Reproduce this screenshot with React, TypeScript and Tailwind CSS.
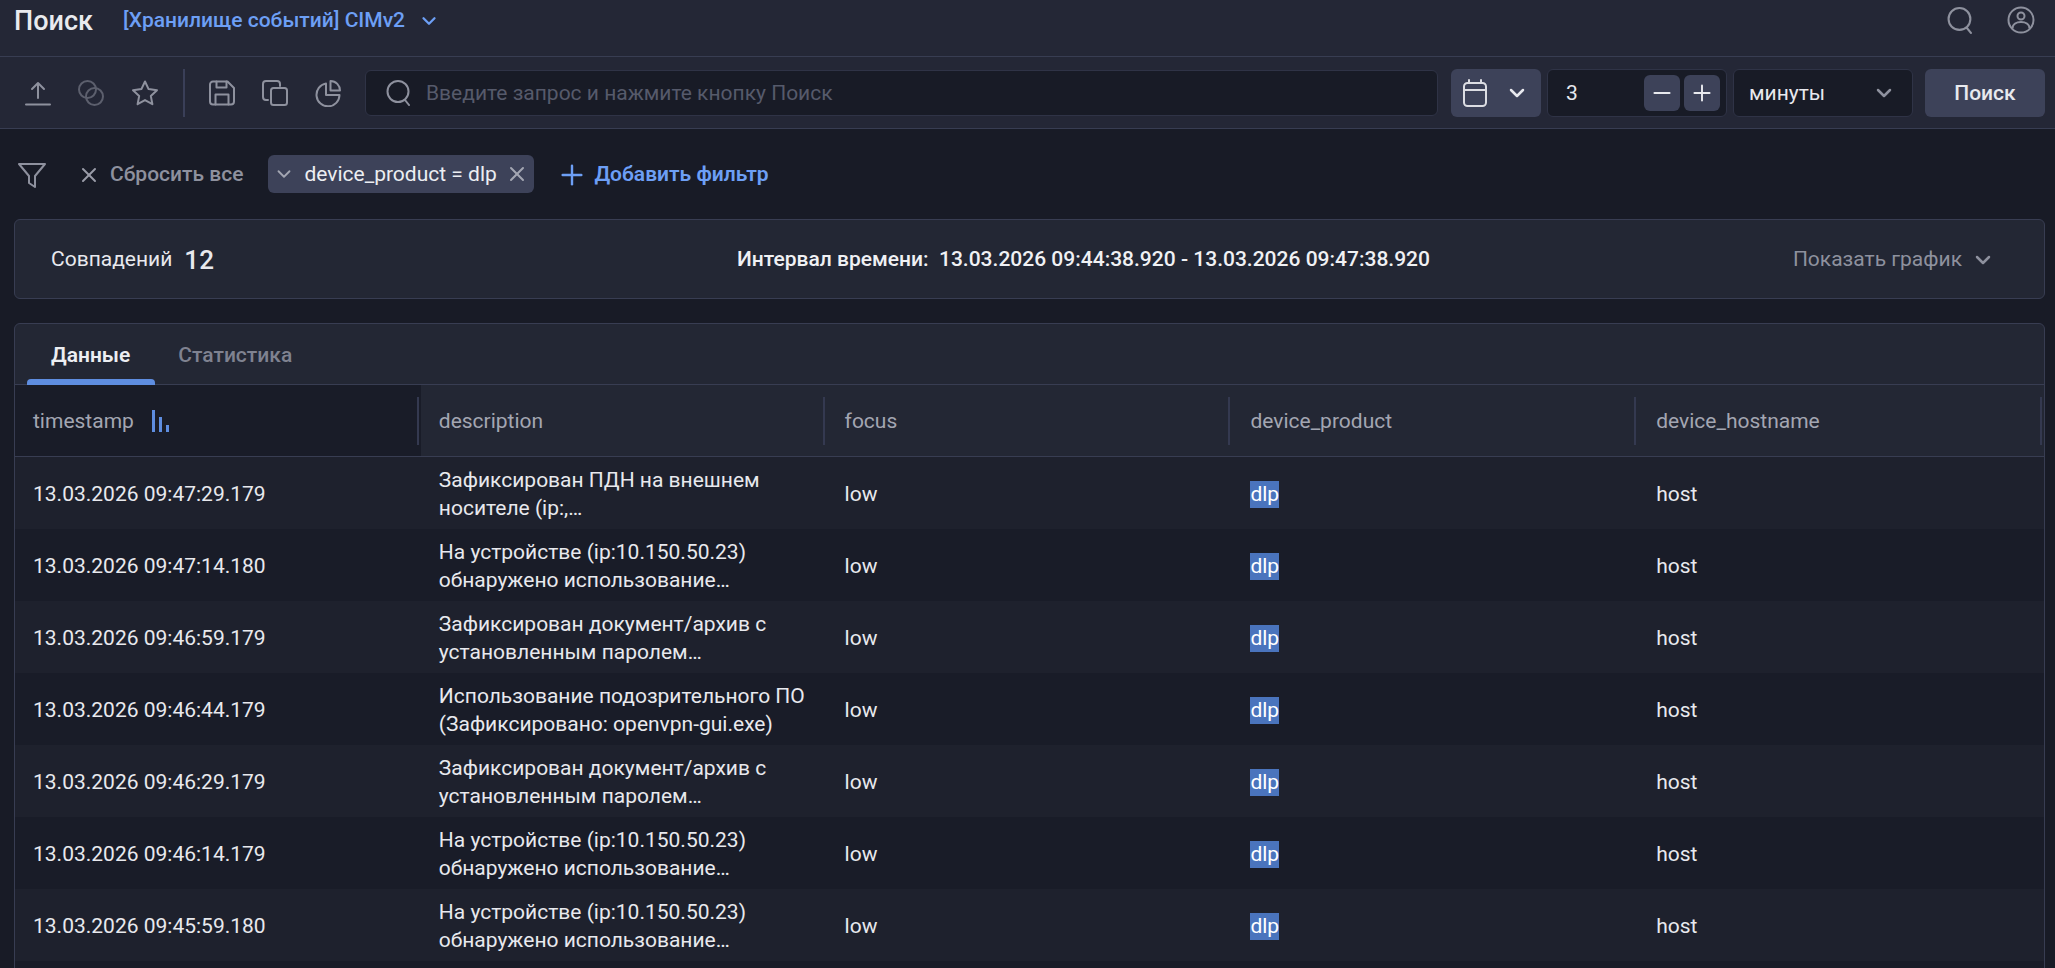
import { ChevronDown, Plus, Minus, X } from "lucide-react";

const rows = [
  ["13.03.2026 09:47:29.179", "Зафиксирован ПДН на внешнем", "носителе (ip:,…"],
  ["13.03.2026 09:47:14.180", "На устройстве (ip:10.150.50.23)", "обнаружено использование…"],
  ["13.03.2026 09:46:59.179", "Зафиксирован документ/архив с", "установленным паролем…"],
  ["13.03.2026 09:46:44.179", "Использование подозрительного ПО", "(Зафиксировано: openvpn-gui.exe)"],
  ["13.03.2026 09:46:29.179", "Зафиксирован документ/архив с", "установленным паролем…"],
  ["13.03.2026 09:46:14.179", "На устройстве (ip:10.150.50.23)", "обнаружено использование…"],
  ["13.03.2026 09:45:59.180", "На устройстве (ip:10.150.50.23)", "обнаружено использование…"],
];

function SearchIcon({ className }: { className: string }) {
  return (
    <svg viewBox="0 0 26 26" fill="none" stroke="currentColor" strokeWidth="2" strokeLinecap="round" className={className}>
      <circle cx="12" cy="11.5" r="10.5" />
      <path d="M19 20l4 5" />
    </svg>
  );
}

function ToolIcon({ children, className = "text-[#8e919e]" }: { children: React.ReactNode; className?: string }) {
  return (
    <svg viewBox="0 0 28 28" fill="none" stroke="currentColor" strokeWidth="2" strokeLinecap="round" strokeLinejoin="round" className={`w-7 h-7 ${className}`}>
      {children}
    </svg>
  );
}

function HeaderCell({ label, dark, sorted }: { label: string; dark?: boolean; sorted?: boolean }) {
  return (
    <div className={`relative flex items-center w-[406px] pl-[18px] ${dark ? "bg-[#191c28]" : ""}`}>
      <span className="mt-[2px] text-[21px] text-[#a3a6b2]">{label}</span>
      {sorted && (
        <span className="flex items-end gap-[4px] ml-[18px] h-[22px]">
          <span className="w-[3px] h-[22px] bg-[#5e8de0]" />
          <span className="w-[3px] h-[15px] bg-[#5e8de0]" />
          <span className="w-[3px] h-[7px] bg-[#5e8de0]" />
        </span>
      )}
      <span className="absolute right-[2px] top-[12px] bottom-[11px] w-[2px] bg-[#343950]" />
    </div>
  );
}

export default function App() {
  return (
    <div className="h-[968px] overflow-hidden bg-[#181b26] font-[Roboto,sans-serif] text-[#e8e9ee]">
      <header className="h-[57px] bg-[#242736] border-b border-[#383d52] flex items-start pt-[5px] pl-[14px] pr-[20px]">
        <h1 className="text-[27px] leading-[32px] font-medium text-[#e9eaee]">Поиск</h1>
        <button className="flex items-center ml-[30px] h-[32px] text-[#6d9ff5] text-[21px] font-medium">
          [Хранилище событий] CIMv2
          <ChevronDown className="w-[22px] h-[22px] ml-[13px]" strokeWidth={2.5} />
        </button>
        <div className="ml-auto flex items-center gap-[33px] text-[#8e919e] h-[32px] mt-[-1px]">
          <SearchIcon className="w-[27px] h-[27px]" />
          <svg viewBox="0 0 28 28" fill="none" stroke="currentColor" strokeWidth="2" className="w-[28px] h-[28px]">
            <circle cx="14" cy="14" r="12.5" />
            <circle cx="14" cy="10" r="3.5" />
            <path d="M5.5 22.5c0-4.5 4-6.5 8.500-6.500s8.500 2 8.500 6.500" />
          </svg>
        </div>
      </header>

      <div className="h-[72px] bg-[#242736] border-b border-[#383d52] flex items-center pl-[24px] pr-[10px]">
        <div className="flex items-center gap-[25px] w-[148px]">
          <ToolIcon>
            <path d="M2 25.500h24M14 19V4M8 10l6-6 6 6" />
          </ToolIcon>
          <ToolIcon className="text-[#5c5f6d]">
            <circle cx="10.500" cy="10.500" r="8.500" />
            <circle cx="17.500" cy="17.500" r="8.500" />
          </ToolIcon>
          <span className="ml-[1px] flex">
            <ToolIcon>
              <path d="M14 2.500l3.600 7.600 8.400 1.100-6.200 5.700 1.600 8.300-7.400-4.100-7.400 4.100 1.600-8.300L2 11.200l8.400-1.100z" />
            </ToolIcon>
          </span>
        </div>
        <span className="w-[2px] h-[48px] bg-[#3a3f58] ml-[11px]" />
        <div className="flex items-center gap-[25px] ml-[23px]">
          <ToolIcon>
            <path d="M2 5.500A3 3 0 0 1 5 2.500h14.500L26 9v13.500a3 3 0 0 1-3 3H5a3 3 0 0 1-3-3z" />
            <path d="M8.500 2.500v6h10v-6M7.500 25.500v-10h13v10" />
          </ToolIcon>
          <ToolIcon>
            <path d="M7 21H5a3 3 0 0 1-3-3V5a3 3 0 0 1 3-3h11a3 3 0 0 1 3 3v2" />
            <rect x="10" y="9" width="16" height="17" rx="2.500" />
          </ToolIcon>
          <ToolIcon>
            <path d="M12 4.500A11.500 11.500 0 1 0 25.500 16H12z" />
            <path d="M16.500 2c5.500 0 9.500 4.500 9.500 9.500h-9.500z" />
          </ToolIcon>
        </div>
        <div className="flex items-center w-[1073px] h-[46px] ml-[23px] bg-[#181b26] border border-[#2f3346] rounded-[6px] pl-[20px]">
          <SearchIcon className="w-[26px] h-[26px] text-[#8e919e] shrink-0" />
          <span className="ml-[14px] mt-[2px] text-[21px] text-[#565a6b]">Введите запрос и нажмите кнопку Поиск</span>
        </div>
        <button className="flex items-center w-[90px] h-[48px] ml-[13px] bg-[#3d4259] rounded-[6px] pl-[12px] text-[#dcdde3]">
          <svg viewBox="0 0 24 28" fill="none" stroke="currentColor" strokeWidth="2" strokeLinecap="round" strokeLinejoin="round" className="w-[24px] h-[28px]">
            <rect x="1" y="4" width="22" height="23" rx="3.500" />
            <path d="M1 11h22M6 1v3M18 1v3" />
          </svg>
          <ChevronDown className="w-[24px] h-[24px] ml-[18px] text-[#e8e9ee]" strokeWidth={2.500} />
        </button>
        <div className="flex items-center w-[180px] h-[48px] ml-[6px] bg-[#181b26] border border-[#2f3346] rounded-[6px] pl-[18px] pr-[6px]">
          <span className="mt-[2px] text-[21px] text-[#e8e9ee]">3</span>
          <button className="flex items-center justify-center w-[36px] h-[36px] ml-auto bg-[#3d4259] rounded-[6px]">
            <Minus className="w-[26px] h-[26px]" strokeWidth={1.800} />
          </button>
          <button className="flex items-center justify-center w-[36px] h-[36px] ml-[4px] bg-[#3d4259] rounded-[6px]">
            <Plus className="w-[26px] h-[26px]" strokeWidth={1.800} />
          </button>
        </div>
        <div className="flex items-center w-[180px] h-[48px] ml-[6px] bg-[#181b26] border border-[#2f3346] rounded-[6px] pl-[15px] pr-[16px]">
          <span className="mt-[2px] text-[21px] text-[#e8e9ee]">минуты</span>
          <ChevronDown className="w-[24px] h-[24px] ml-auto text-[#8e919e]" strokeWidth={2.500} />
        </div>
        <button className="w-[120px] h-[48px] ml-[12px] pt-[2px] bg-[#3d4259] rounded-[6px] text-[21px] font-medium text-[#e8e9ee]">Поиск</button>
      </div>

      <div className="h-[90px] flex items-center pl-[18px]">
        <svg viewBox="0 0 28 26" fill="none" stroke="#8e919e" strokeWidth="2" strokeLinejoin="round" className="mt-[2px] w-[28px] h-[26px]">
          <path d="M1 2h26L17 14v11l-6-4v-7z" />
        </svg>
        <X className="mt-[2px] w-[24px] h-[24px] ml-[31px] text-[#9a9ca8]" strokeWidth={2} />
        <span className="mt-[2px] ml-[9px] text-[21px] font-medium text-[#8e919e]">Сбросить все</span>
        <div className="flex items-center h-[38px] w-[266px] ml-[25px] bg-[#3d4259] rounded-[6px] pl-[5px]">
          <ChevronDown className="w-[22px] h-[22px] text-[#a3a6b2]" strokeWidth={2} />
          <span className="mt-[2px] ml-[9px] w-[196px] text-[21px] text-[#eceef2]">device_product = dlp</span>
          <X className="w-[24px] h-[24px] ml-[5px] text-[#a3a6b2]" strokeWidth={2} />
        </div>
        <Plus className="mt-[2px] w-[32px] h-[32px] ml-[22px] text-[#6d9ff5]" strokeWidth={1.800} />
        <span className="mt-[2px] ml-[6px] text-[21px] font-semibold text-[#6d9ff5]">Добавить фильтр</span>
      </div>

      <div className="mx-[14px] mr-[10px] h-[80px] bg-[#232734] border border-[#383d52] rounded-[6px] flex items-center pl-[36px] pr-[49px] pt-[2px]">
        <div className="flex items-center w-[686px]">
          <span className="text-[21px] text-[#e8e9ee]">Совпадений</span>
          <span className="ml-[12px] text-[26px] font-medium text-[#e8e9ee]">12</span>
        </div>
        <div className="text-[21px] font-medium text-[#f0f1f4] whitespace-pre">Интервал времени:  13.03.2026 09:44:38.920 - 13.03.2026 09:47:38.920</div>
        <button className="ml-auto flex items-center text-[21px] text-[#8e919e]">
          Показать график
          <ChevronDown className="w-[24px] h-[24px] ml-[9px]" strokeWidth={2.500} />
        </button>
      </div>

      <div className="mx-[14px] mr-[10px] mt-[24px] bg-[#232734] border border-[#383d52] rounded-t-[6px]">
        <div className="relative h-[61px] flex items-center border-b border-[#383d52] pt-[3px]">
          <span className="ml-[36px] text-[21px] font-semibold text-[#eceef2]">Данные</span>
          <span className="ml-[48px] text-[21px] font-medium text-[#7f8290]">Статистика</span>
          <span className="absolute left-[12px] bottom-[-1px] w-[128px] h-[6px] bg-[#5e8de0] rounded-t-[4px]" />
        </div>
        <div className="h-[72px] flex border-b border-[#383d52]">
          <HeaderCell label="timestamp" dark sorted />
          <HeaderCell label="description" />
          <HeaderCell label="focus" />
          <HeaderCell label="device_product" />
          <HeaderCell label="device_hostname" />
        </div>
        {rows.map((row, i) => (
          <div key={row[0]} className={`h-[72px] flex items-center pt-[3px] text-[21px] ${i % 2 === 0 ? "bg-[#1e212d]" : "bg-[#191c28]"}`}>
            <div className="w-[406px] pl-[18px]">{row[0]}</div>
            <div className="w-[406px] pl-[18px] mt-[-2px] leading-[28px]">
              <div>{row[1]}</div>
              <div>{row[2]}</div>
            </div>
            <div className="w-[406px] pl-[18px]">low</div>
            <div className="w-[406px] pl-[18px]">
              <span className="bg-[#4a74bd] text-white inline-block leading-[27px]">dlp</span>
            </div>
            <div className="w-[406px] pl-[18px]">host</div>
          </div>
        ))}
        <div className="h-[72px] bg-[#191c28]" />
      </div>
    </div>
  );
}
